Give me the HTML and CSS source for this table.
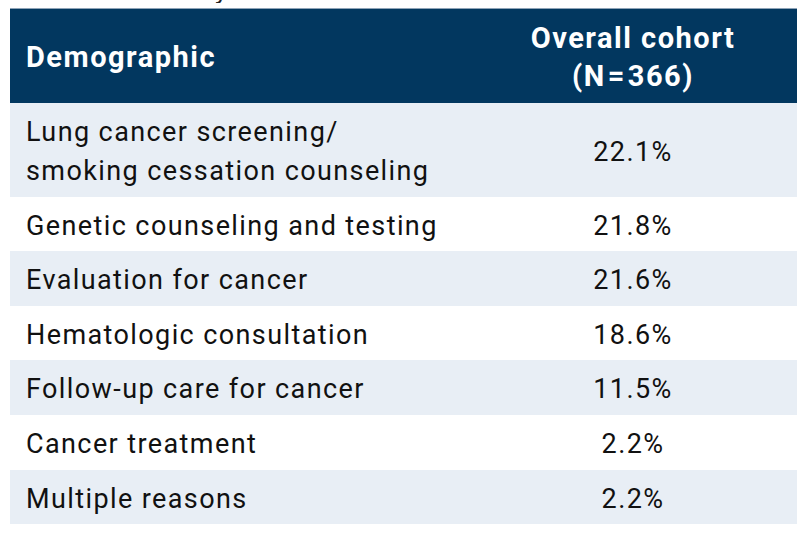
FILE: index.html
```html
<!DOCTYPE html>
<html>
<head>
<meta charset="utf-8">
<link rel="stylesheet" href="styles.css">
</head>
<body>
<div class="page">
  <div class="clip"><span class="cut">y</span></div>
  <table class="tbl">
    <thead>
      <tr>
        <th class="c1">Demographic</th>
        <th class="c2">Overall cohort<br>(N<span class="eq">=</span>366)</th>
      </tr>
    </thead>
    <tbody>
      <tr class="alt"><td class="c1">Lung cancer screening/<br>smoking cessation counseling</td><td class="c2">22.1%</td></tr>
      <tr><td class="c1">Genetic counseling and testing</td><td class="c2">21.8%</td></tr>
      <tr class="alt"><td class="c1">Evaluation for cancer</td><td class="c2">21.6%</td></tr>
      <tr><td class="c1">Hematologic consultation</td><td class="c2">18.6%</td></tr>
      <tr class="alt"><td class="c1">Follow-up care for cancer</td><td class="c2">11.5%</td></tr>
      <tr><td class="c1">Cancer treatment</td><td class="c2">2.2%</td></tr>
      <tr class="alt"><td class="c1">Multiple reasons</td><td class="c2">2.2%</td></tr>
    </tbody>
  </table>
</div>
</body>
</html>
```
FILE: styles.css
```css
html, body {
  margin: 0;
  padding: 0;
  background: #ffffff;
}
.page {
  position: relative;
  padding: 8px 15px 0 10px;
  font-family: Roboto, "Liberation Sans", sans-serif;
  color: #111111;
}
.clip {
  position: absolute;
  top: 0;
  left: 0;
  width: 100%;
  height: 3px;
  overflow: hidden;
}
.cut {
  position: absolute;
  left: 215px;
  top: -25px;
  font-size: 26px;
  color: #222;
}
.tbl {
  width: 787px;
  border-collapse: collapse;
  border-top: 1px solid #8ea3b7;
}
.tbl th {
  background: #02375f;
  color: #ffffff;
  font-weight: 700;
  font-size: 29px;
  letter-spacing: 1.5px;
  line-height: 38px;
  padding: 10px 0 8px 0;
}
.eq {
  margin: 0 2px;
}
.tbl th.c1 {
  text-align: left;
  padding-left: 16px;
}
.tbl td {
  font-size: 27px;
  letter-spacing: 1.4px;
  line-height: 39px;
  padding: 10px 0 5.6px 0;
}
.c1 {
  width: 443px;
  padding-left: 16px;
  text-align: left;
}
.c2 {
  text-align: center;
}
.tbl td.c1 {
  padding-left: 16px;
}
.tbl tr.alt td {
  background: #e8eef5;
}
```
